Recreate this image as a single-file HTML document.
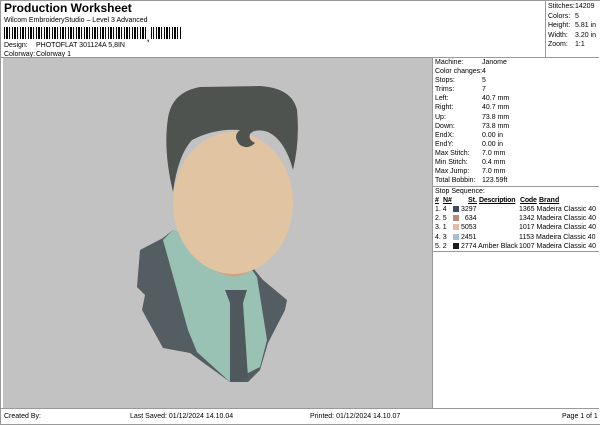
<!DOCTYPE html>
<html><head><style>
body{margin:0;width:600px;height:424px;background:#fff;font-family:"Liberation Sans",sans-serif;color:#000;position:relative;overflow:hidden}
.a{position:absolute;white-space:nowrap}
.s{font-size:7px;line-height:9.2px}
</style></head><body>
<div class="a" style="left:0;top:0;width:599px;height:423px;border:1px solid #999"></div>
<div class="a" style="left:4px;top:1px;font-size:12px;font-weight:bold">Production Worksheet</div>
<div class="a s" style="left:4px;top:16px">Wilcom EmbroideryStudio – Level 3 Advanced</div>
<div class="a" style="left:4px;top:27px;width:177px;height:12px;background:repeating-linear-gradient(90deg,#000 0 1px,#fff 1px 2px,#000 2px 4px,#fff 4px 5px,#000 5px 6px,#fff 6px 8px)"></div>
<div class="a" style="left:146px;top:27px;width:5px;height:13px;background:#fff"></div>
<div class="a" style="left:147px;top:34px;font-size:8px;font-weight:bold">,</div>
<div class="a s" style="left:4px;top:41px">Design:</div><div class="a s" style="left:36px;top:41px">PHOTOFLAT 301124A 5,8IN</div>
<div class="a s" style="left:4px;top:50px">Colorway:</div><div class="a s" style="left:36px;top:50px">Colorway 1</div>
<div class="a" style="left:545px;top:0;width:1px;height:57px;background:#999"></div>
<div class="a s" style="left:548px;top:2px;line-height:9.6px">Stitches:<br>Colors:<br>Height:<br>Width:<br>Zoom:</div>
<div class="a s" style="left:575px;top:2px;line-height:9.6px">14209<br>5<br>5.81 in<br>3.20 in<br>1:1</div>
<div class="a" style="left:1px;top:57px;width:598px;height:1px;background:#999"></div>
<div class="a" style="left:3px;top:58px;width:429px;height:350px;background:#c2c2c2"></div>
<div class="a" style="left:432px;top:58px;width:1px;height:350px;background:#999"></div>
<svg class="a" style="left:0;top:0" width="600" height="424">
<polygon points="140,250 163,238 173,230 253,268 263,280 287,300 285,310 268,343 260,370 248,382 230,382 190,353 163,348 142,310 145,295 137,287" fill="#545d62"/>
<polygon points="163,240 173,230 250,267 257,277 267,340 260,367 230,382 197,352 188,330" fill="#9ac2b4"/>
<polygon points="225,290 247,290 243,303 248,377 240,382 230,382 230,303" fill="#4f585d"/>
<path d="M198,255 Q230,292 256,266 L250,240 Z" fill="#c9a782"/>
<ellipse cx="233" cy="203" rx="60" ry="71" fill="#e1c4a2"/>
<path d="M173,192 Q163,150 168,118 Q172,92 200,87 L260,86 Q292,88 297,110 Q300,140 293,170 Q285,140 268,132 Q255,128 250,134 Q248,140 255,143 Q248,150 240,145 Q232,136 240,130 Q215,128 192,140 Q178,155 173,192 Z" fill="#4e5350"/>
</svg>
<div class="a s" style="left:435px;top:58px;line-height:9.1px">Machine:<br>Color changes:<br>Stops:<br>Trims:<br>Left:<br>Right:<br>Up:<br>Down:<br>EndX:<br>EndY:<br>Max Stitch:<br>Min Stitch:<br>Max Jump:<br>Total Bobbin:</div>
<div class="a s" style="left:482px;top:58px;line-height:9.1px">Janome<br>4<br>5<br>7<br>40.7 mm<br>40.7 mm<br>73.8 mm<br>73.8 mm<br>0.00 in<br>0.00 in<br>7.0 mm<br>0.4 mm<br>7.0 mm<br>123.59ft</div>
<div class="a" style="left:433px;top:186px;width:166px;height:1px;background:#999"></div>
<div class="a s" style="left:435px;top:187px">Stop Sequence:</div>
<div class="a s" style="left:435px;top:196px;text-decoration:underline;font-weight:bold">#</div>
<div class="a s" style="left:443px;top:196px;text-decoration:underline;font-weight:bold">N#</div>
<div class="a s" style="left:468px;top:196px;text-decoration:underline;font-weight:bold">St.</div>
<div class="a s" style="left:479px;top:196px;text-decoration:underline;font-weight:bold;letter-spacing:-0.2px">Description</div>
<div class="a s" style="left:520px;top:196px;text-decoration:underline;font-weight:bold;letter-spacing:-0.2px">Code</div>
<div class="a s" style="left:539px;top:196px;text-decoration:underline;font-weight:bold">Brand</div>
<div class="a s" style="left:435px;top:205px;line-height:9.2px">1. 4<br>2. 5<br>3. 1<br>4. 3<br>5. 2</div>
<div class="a" style="left:453px;top:206px;width:6px;height:6px;background:#3d4a66"></div>
<div class="a" style="left:453px;top:215px;width:6px;height:6px;background:#b88b78"></div>
<div class="a" style="left:453px;top:224px;width:6px;height:6px;background:#e8b8a8"></div>
<div class="a" style="left:453px;top:234px;width:6px;height:6px;background:#a4c0d8"></div>
<div class="a" style="left:453px;top:243px;width:6px;height:6px;background:#1a1a1a"></div>
<div class="a s" style="left:461px;top:205px;line-height:9.2px">3297<br>&nbsp;&nbsp;634<br>5053<br>2451<br>2774 Amber Black</div>
<div class="a s" style="left:519px;top:205px;line-height:9.2px">1365 Madeira Classic 40<br>1342 Madeira Classic 40<br>1017 Madeira Classic 40<br>1153 Madeira Classic 40<br>1007 Madeira Classic 40</div>
<div class="a" style="left:433px;top:251px;width:166px;height:1px;background:#999"></div>
<div class="a" style="left:1px;top:408px;width:598px;height:1px;background:#999"></div>
<div class="a s" style="left:4px;top:412px">Created By:</div>
<div class="a s" style="left:130px;top:412px">Last Saved: 01/12/2024 14.10.04</div>
<div class="a s" style="left:310px;top:412px">Printed: 01/12/2024 14.10.07</div>
<div class="a s" style="left:562px;top:412px">Page 1 of 1</div>
</body></html>
